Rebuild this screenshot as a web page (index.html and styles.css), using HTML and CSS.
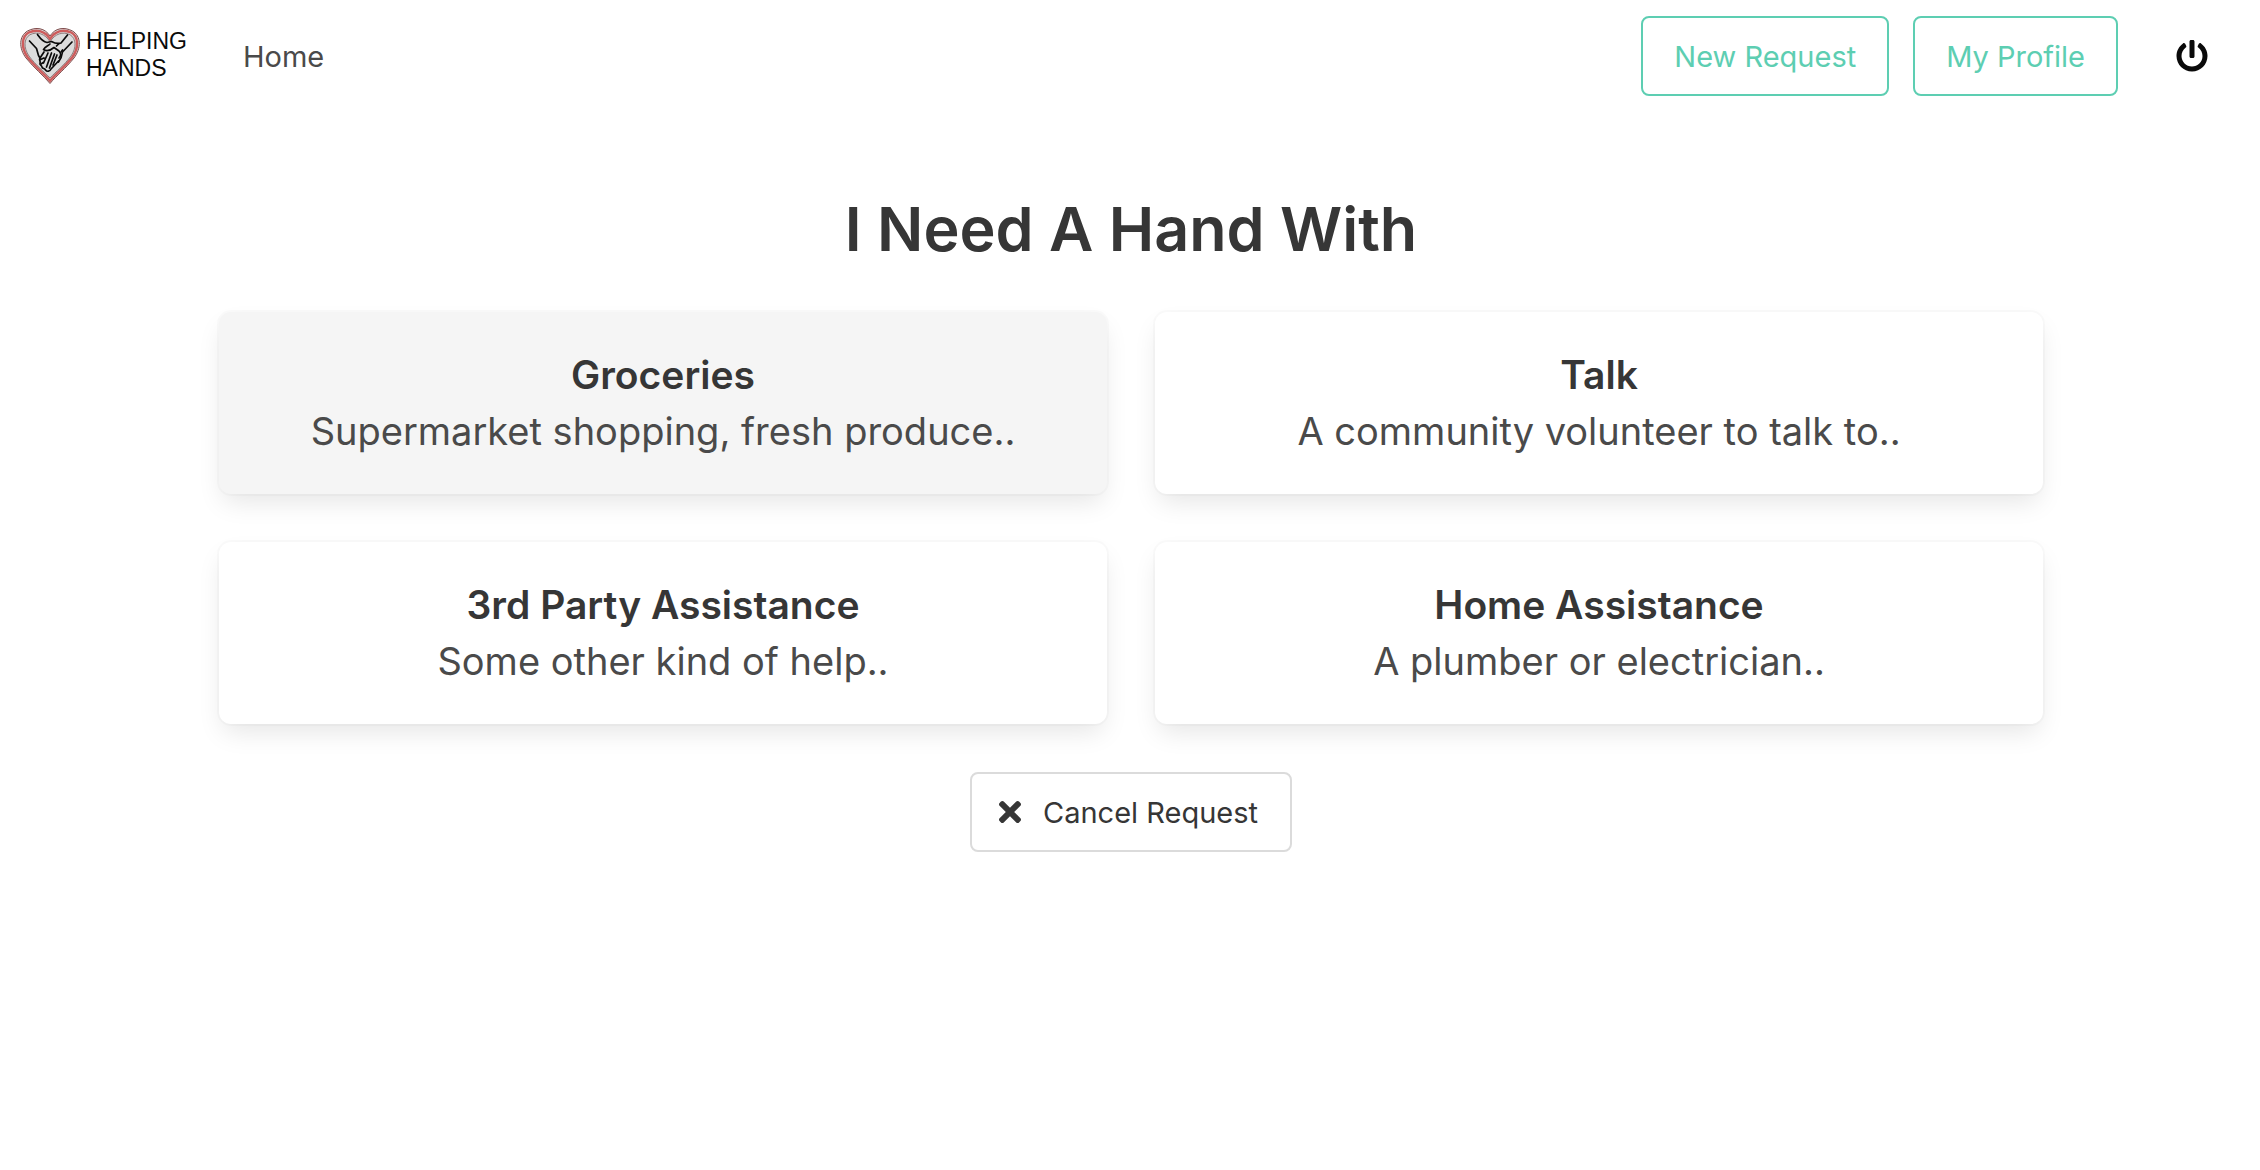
FILE: index.html
```html
<!DOCTYPE html>
<html lang="en">
<head>
  <meta charset="utf-8">
  <meta name="viewport" content="width=device-width, initial-scale=1">
  <title>Helping Hands</title>
  <link rel="stylesheet" href="styles.css">
</head>
<body>
  <header class="navbar">
    <a class="brand" href="#">
      <svg class="brand-mark" viewBox="0 0 60 56" aria-hidden="true">
        <path d="M30 55.500C24 48 14 40 6 30C-1.500 20 -1 8 7.500 3C16 -1.500 25 0 30 8C35 0 44 -1.500 52.500 3C61 8 61.500 20 54 30C46 40 36 48 30 55.500Z" fill="#dcdcdc" stroke="#7d4a4a" stroke-width="1"/>
        <path d="M30 52.800C24 45.500 15 38.800 7.500 29C1 19.500 1.500 8.500 8.700 4.500C17 1 25 3 30 10.800C35 3 43 1 51.300 4.500C58.500 8.500 59 19.500 52.500 29C45 38.800 36 45.500 30 52.800Z" fill="none" stroke="#cd5c5c" stroke-width="2.400"/>
        <path d="M30 50C24 43.500 16 37.500 9 28C3.500 20 3.500 10.500 10 6.700C17 3.200 25 5.700 30 13.700C35 5.700 43 3.200 50 6.700C56.500 10.500 56.500 20 51 28C44 37.500 36 43.500 30 50Z" fill="none" stroke="#6b5555" stroke-width="0.700"/>
        <g fill="none" stroke="#0a0a0a" stroke-width="1.700" stroke-linecap="round" stroke-linejoin="round">
          <path d="M9.500 13L16.500 20.500L18.500 27.500L20 30"/>
          <path d="M17.500 6.500C20 10 22 13.500 27 14.500L31.500 13.500C35 15.500 38 16 41 15L47.500 7"/>
          <path d="M52 14L42.500 24C42 28 41 31 38.500 34"/>
          <path d="M30 16C28 18 24.500 19 23.500 21.500C27 24 31 22 34 19.500L39 23C41 25 41 28 39 30"/>
          <path d="M24 24L20 30C18.500 32 21 33.500 20 35C19 37 22 37.500 22 39C22 41 25 40 25.500 42C27 44 30 43.500 31 41L38.500 33"/>
          <path d="M28 25L23.500 35M31.500 25L26.500 39M34.500 26L29.500 40M37 27L33 37M20.500 31.500L24 30M21 36L24 34M38.500 16L36.500 18M42.500 22L41 24"/>
        </g>
      </svg>
      <span class="brand-name">HELPING<br>HANDS</span>
    </a>
    <nav class="nav-links"><a class="nav-link" href="#">Home</a></nav>
    <div class="nav-actions">
      <button class="button button-primary" type="button">New Request</button>
      <button class="button button-primary" type="button">My Profile</button>
      <button class="icon-button" type="button" aria-label="Log out">
        <svg class="power-icon" viewBox="0 0 512 512" aria-hidden="true">
          <path fill="currentColor" d="M400 54.100c63 45 104 118.600 104 201.900 0 136.800-110.800 247.700-247.500 248C120 504.300 8.200 393 8 256.400 7.900 173.100 48.900 99.300 111.800 54.200c11.700-8.300 28-4.800 35 7.700L162.600 90c5.900 10.500 3.100 23.800-6.600 31-41.500 30.800-68 79.600-68 134.900-.1 92.300 74.500 168.100 168 168.100 91.600 0 168.600-74.200 168-169.100-.3-51.800-24.700-101.800-68.100-134-9.700-7.200-12.400-20.500-6.500-30.900l15.800-28.100c7-12.400 23.200-16.100 34.800-7.800zM296 264V24c0-13.300-10.700-24-24-24h-32c-13.300 0-24 10.700-24 24v240c0 13.300 10.700 24 24 24h32c13.300 0 24-10.700 24-24z"/>
        </svg>
      </button>
    </div>
  </header>

  <main class="content">
    <h1 class="title">I Need A Hand With</h1>
    <div class="choices">
      <button class="choice choice-active" type="button">
        <strong class="choice-name">Groceries</strong>
        <span class="choice-note">Supermarket shopping, fresh produce..</span>
      </button>
      <button class="choice" type="button">
        <strong class="choice-name">Talk</strong>
        <span class="choice-note">A community volunteer to talk to..</span>
      </button>
      <button class="choice" type="button">
        <strong class="choice-name">3rd Party Assistance</strong>
        <span class="choice-note">Some other kind of help..</span>
      </button>
      <button class="choice" type="button">
        <strong class="choice-name">Home Assistance</strong>
        <span class="choice-note">A plumber or electrician..</span>
      </button>
    </div>
    <button class="button button-cancel" type="button">
      <svg class="cross-icon" viewBox="0 0 352 352" aria-hidden="true">
        <path fill="currentColor" d="M242.700 176l100.100-100.100c12.300-12.300 12.300-32.200 0-44.500l-22.200-22.200c-12.300-12.300-32.200-12.300-44.500 0L176 109.300 75.900 9.200c-12.300-12.300-32.200-12.300-44.500 0L9.200 31.500c-12.300 12.300-12.300 32.200 0 44.500L109.300 176 9.200 276.100c-12.300 12.300-12.300 32.200 0 44.500l22.200 22.200c12.300 12.300 32.200 12.300 44.500 0L176 242.700l100.100 100.100c12.300 12.300 32.200 12.300 44.500 0l22.200-22.200c12.300-12.300 12.300-32.200 0-44.500L242.700 176z"/>
      </svg>
      Cancel Request
    </button>
  </main>
</body>
</html>
```
FILE: styles.css
```css
*,
*::before,
*::after {
  box-sizing: border-box;
}

body {
  margin: 0;
  background: #fff;
  color: #4a4a4a;
  font-family: Inter, "Liberation Sans", sans-serif;
  font-size: 29px;
}

button {
  font: inherit;
  cursor: pointer;
}

a {
  color: inherit;
  text-decoration: none;
}

.navbar {
  display: flex;
  align-items: center;
  min-height: 112px;
  padding: 0 52px 0 20px;
}

.brand {
  display: flex;
  align-items: flex-start;
  gap: 6px;
}

.brand-mark {
  width: 60px;
  height: 56px;
}

.brand-name {
  color: #0a0a0a;
  font-family: "Liberation Sans", Arial, sans-serif;
  font-size: 23px;
  line-height: 27px;
}

.nav-links {
  padding-left: 56px;
}

.nav-actions {
  display: flex;
  align-items: center;
  gap: 24px;
  margin-left: auto;
}

.button {
  display: inline-flex;
  align-items: center;
  justify-content: center;
  height: 80px;
  padding: 0 31px;
  border: 2px solid;
  border-radius: 8px;
  background: #fff;
}

.button-primary {
  border-color: #5dceb2;
  color: #5dceb2;
}

.icon-button {
  display: flex;
  margin-left: 34px;
  padding: 0;
  border: 0;
  background: none;
  color: #0a0a0a;
}

.power-icon {
  width: 32px;
  height: 32px;
}

.content {
  display: flex;
  flex-direction: column;
  align-items: center;
  gap: 48px;
  max-width: 1922px;
  margin: 0 auto;
  padding: 82px 48px 48px 50px;
}

.title {
  margin: 0;
  color: #363636;
  font-size: 61px;
  font-weight: 600;
  line-height: 70px;
}

.choices {
  display: grid;
  grid-template-columns: 1fr 1fr;
  gap: 48px;
  width: 100%;
}

.choice {
  display: flex;
  flex-direction: column;
  align-items: center;
  padding: 35px;
  border: 0;
  border-radius: 12px;
  background: #fff;
  box-shadow: 0 12px 26px -4px rgba(10, 10, 10, 0.1), 0 0 0 2px rgba(10, 10, 10, 0.02);
  color: #4a4a4a;
  font-size: 38px;
  line-height: 56px;
}

.choice-active {
  background: #f5f5f5;
}

.choice-name {
  color: #363636;
  font-size: 39px;
  font-weight: 600;
}

.button-cancel {
  gap: 22px;
  padding: 0 32px 0 27px;
  border-color: #dbdbdb;
  color: #363636;
}

.cross-icon {
  width: 22px;
  height: 22px;
}
```
